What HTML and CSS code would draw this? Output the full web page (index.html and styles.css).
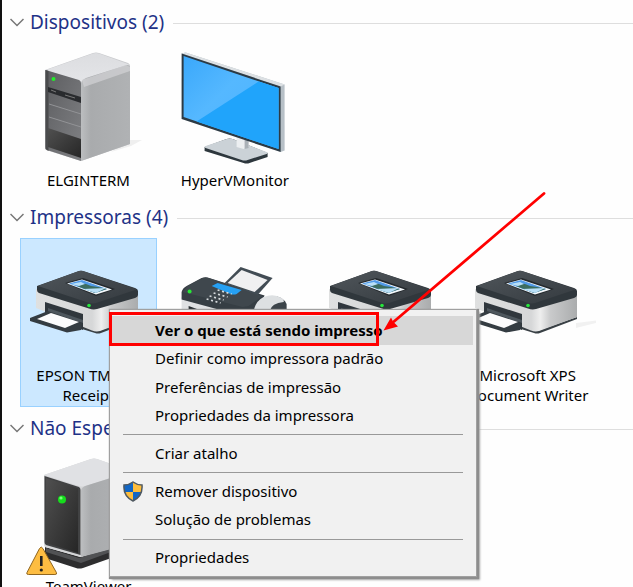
FILE: index.html
```html
<!DOCTYPE html>
<html lang="pt-BR">
<head>
<meta charset="utf-8">
<title>Dispositivos e Impressoras</title>
<link rel="stylesheet" href="styles.css">
</head>
<body>
<svg class="defs" width="0" height="0">
  <defs>
    <linearGradient id="side" x1="0" y1="0" x2="1" y2="0"><stop offset="0" stop-color="#bcbec0"/><stop offset=".2" stop-color="#a9abad"/><stop offset="1" stop-color="#b0b2b4"/></linearGradient>
    <linearGradient id="top" x1="0" y1="0" x2="0" y2="1"><stop offset="0" stop-color="#dcdde0"/><stop offset="1" stop-color="#e4e5e8"/></linearGradient>
    <linearGradient id="front" x1="0" y1="0" x2="1" y2="1"><stop offset="0" stop-color="#5c5d60"/><stop offset="1" stop-color="#808184"/></linearGradient>
    <linearGradient id="dark" x1="0" y1="0" x2="1" y2="1"><stop offset="0" stop-color="#505050"/><stop offset="1" stop-color="#262626"/></linearGradient>
    <linearGradient id="screen" x1="0" y1="0" x2="1" y2="1"><stop offset="0" stop-color="#3aa8fb"/><stop offset=".4" stop-color="#55b8ff"/><stop offset="1" stop-color="#4ab2ff"/></linearGradient>
    <linearGradient id="body" x1="0" y1="0" x2="1" y2="0"><stop offset="0" stop-color="#dfe0e0"/><stop offset=".55" stop-color="#d6d7d8"/><stop offset=".64" stop-color="#eeeeee"/><stop offset=".74" stop-color="#c9cacb"/><stop offset="1" stop-color="#aaacad"/></linearGradient>
    <linearGradient id="lid" x1="0" y1="0" x2="1" y2="1"><stop offset="0" stop-color="#50565b"/><stop offset="1" stop-color="#343a3f"/></linearGradient>
    <symbol id="printer" viewBox="20 238 137 120">
      <path d="M137 328l24-6v-2l-24 3z" fill="#000" opacity=".05"/>
      <path d="M36 306l60 23.500q2 1.500 5 .5l37-13V319l-37 14q-3 1-6 0L82 329z" fill="#394045"/>
      <path d="M36 289L92 308l46-15v24l-38 14q-4 1-8-.5L36 308z" fill="url(#body)"/>
      <path d="M45 302l38 12v16l-38-13z" fill="#30373d"/>
      <path d="M48 308l35 12v3l-35-11z" fill="#4d565d"/>
      <path d="M30 318l18-7 34 12-1 7-14 2.500L30 321z" fill="#343c42"/>
      <path d="M37 319l14-6 28 9-14 6z" fill="#fbfbfc"/>
      <path d="M37 286l42-15q2-.5 4 0l52 17q3 1 3 3v4q0 2-3 3l-38 11q-4 1-8-.5L39 293q-2-1-2-3z" fill="#30373c"/>
      <path d="M38 286l41-15q2-.5 4 0l53 18q1 .6-1 1L96 303q-4 1-8-.5z" fill="url(#lid)"/>
      <path d="M65 283l18-5 32 11-19 7z" fill="#24292d"/>
      <path d="M67 283.500l15-4 30 10-16 5z" fill="#f3f8fb"/>
      <path d="M69 283.500l13-3.500 25 9-12 4z" fill="#519ae8"/>
      <path d="M77 286q5-3 9-2l5 2 7 1 9 2-12 4z" fill="#3c6d60"/>
      <path d="M71 284l10-2 4 2-6 2zM83 289l23-1-10 5z" fill="#b8dff7"/>
      <circle cx="89" cy="305.500" r="1.800" fill="#27e63c"/>
    </symbol>
  </defs>
</svg>

<main class="window">
  <section class="group">
    <h2 class="group-head"><svg class="chevron" viewBox="0 0 14 9"><path d="M.5 1l6.500 6.500L13.500 1"/></svg><span class="group-title t-disp">Dispositivos (2)</span><i class="rule"></i></h2>
    <div class="tiles">
      <div class="tile">
        <svg class="icon" viewBox="20 43 137 120">
          <path d="M128 140l14 0-11 6-20 6z" fill="#000" opacity=".06"/>
          <path d="M45 70L93 53q3-1 6 0l29 10q2 1 2 3v78L81 161 46 150q-1-1-1-3z" fill="#c9cacd"/>
          <path d="M46 70L93 53.500q3-1 6 0L128 64q2 1 0 2L85 82q-3 1-6 0z" fill="url(#top)"/>
          <path d="M81 84q0-4 5-6l41-13q3 0 3 3v76L81 161z" fill="url(#side)"/>
          <path d="M82 80l44-15 4 2v4L84 87z" fill="#d5d6d8" opacity=".65"/>
          <path d="M45.500 70L79 80q2 1 2 3v78L47 150q-1.500-1-1.500-3z" fill="url(#front)"/>
          <path d="M45.500 70l3 1v80l-3-2z" fill="#4a4b4d"/>
          <path d="M48 87l33 10v6L48 92z" fill="#292b2e"/>
          <path d="M51 90l5 2M65 95l10 3" stroke="#777" fill="none"/>
          <path d="M49 104l32 10M49 117l32 10" stroke="#929396" fill="none"/>
          <path d="M48 128l33 11v19l-33-11z" fill="url(#dark)"/>
          <circle cx="53.500" cy="79" r="2" fill="#20ef28"/>
        </svg>
        <span class="label l-elgin">ELGINTERM</span>
      </div>
      <div class="tile">
        <svg class="icon" viewBox="166.400 43 137 120">
          <path d="M205 147l22-8q3-1 6 0l35 14v4l-18 6q-3 1-6 0l-39-12z" fill="#2d373d"/>
          <path d="M206 146l21-7q3-1 6 0l34 13q2 1 0 2l-19 6q-3 1-6 0l-36-12q-2-1 0-2z" fill="#cbd2d7"/>
          <path d="M237 137l12 2v8l-5 2-7-2z" fill="#eceff1"/><path d="M245 139l4 1v8l-4 1z" fill="#aab1b7"/>
          <path d="M182 53.500l4-1 99 32v66l-4 1.500z" fill="#b7c0c7"/>
          <path d="M182 53.500l4-1 99 32-4 2z" fill="#dce0e3"/>
          <path d="M182 53.500l99 33V152l-99-33z" fill="#2c3a44"/>
          <path d="M184 56l95 32v61l-95-32z" fill="url(#screen)"/>
          <path d="M279 88v61l-82-27.500 62-40z" fill="#20a4fb"/>
        </svg>
        <span class="label l-hyper">HyperVMonitor</span>
      </div>
    </div>
  </section>

  <section class="group">
    <h2 class="group-head"><svg class="chevron" viewBox="0 0 14 9"><path d="M.5 1l6.500 6.500L13.500 1"/></svg><span class="group-title t-imp">Impressoras (4)</span><i class="rule"></i></h2>
    <div class="tiles">
      <div class="tile selected">
        <svg class="icon"><use href="#printer"/></svg>
        <span class="label">EPSON TM-T20</span><span class="label">Receipt</span>
      </div>
      <div class="tile">
        <svg class="icon" viewBox="166.400 238 137 120">
          <path d="M182 297l75 13 29-9 1 16h-105z" fill="#dfe1e3"/>
          <path d="M189 306l25 9-25-2z" fill="#252b2f"/>
          <path d="M182 292q1-4 5-6l15-8q3-1 6-.5l57 18q-4 10-14 18l-10 2-59-16z" fill="#363e44"/>
          <path d="M183 292l5-6 15-8q3-1 6 0l54 18-14 10-6 1z" fill="#3f474d"/>
          <path d="M225 283l16-16 32 11-15 17z" fill="#424c54"/>
          <path d="M228 283l14-13 26 10-13 12z" fill="#f0f0f1"/>
          <path d="M212 286l6-3 24 7-5 4q-3 1-6 0z" fill="#26a0f3"/>
          <path d="M218 290l14 4M214 293l14 4M210 296l14 4M207 299l14 4" stroke="#d8dcdf" stroke-width="1.700" stroke-dasharray="2 2.600" fill="none"/>
          <path d="M258 310q3-12 15-14 10 0 14 8v8z" fill="#3c444a"/>
          <path d="M254 311q2-10 10-14 10-4 18 1 3 2 2 4-12 1-14 9z" fill="#dde0e2"/>
          <circle cx="190" cy="291.500" r="2" fill="#26e936"/>
        </svg>
        <span class="label">Fax</span>
      </div>
      <div class="tile">
        <svg class="icon"><use href="#printer"/></svg>
        <span class="label">Microsoft Print to</span><span class="label">PDF</span>
      </div>
      <div class="tile">
        <svg class="icon"><use href="#printer"/></svg>
        <span class="label l-xps">Microsoft XPS</span><span class="label l-writer">Document Writer</span>
      </div>
    </div>
  </section>

  <section class="group">
    <h2 class="group-head"><svg class="chevron" viewBox="0 0 14 9"><path d="M.5 1l6.500 6.500L13.500 1"/></svg><span class="group-title t-nao">Não Especificado (1)</span><i class="rule"></i></h2>
    <div class="tiles">
      <div class="tile">
        <svg class="icon" viewBox="20 449 137 120">
          <path d="M45 547l36 10 50-17v11l-48 17q-4 1-7 0l-28-9q-3-1-3-4z" fill="#2d2d2e"/>
          <path d="M46 548l33 10 51-17v4l-49 18-35-11z" fill="#515254"/>
          <path d="M44 475l47-16q3-1 6 0l34 12v72l-51 14-35-10q-1-1-1-3z" fill="#d4d5d7"/>
          <path d="M44 475l47-16q3-1 6 0l34 12-45 15q-4 1-7 0z" fill="#e0e1e4"/>
          <path d="M81 491q0-3 4-5l45-14v72l-49 13z" fill="url(#side)"/>
          <path d="M44.500 476L79 487q1.500 1 1.500 3v65L46 545q-1.500-1-1.500-3z" fill="#414243"/>
          <path d="M46 478l32 10.500V553l-32-10z" fill="url(#dark)"/>
          <circle cx="62" cy="499.500" r="4" fill="#15de1c"/><circle cx="61" cy="498" r="1.600" fill="#79ff79"/>
          <path d="M39.500 548.500q1.700-3 3.400 0l13.500 24q1 2-1.500 2H28.500q-2.500 0-1.500-2z" fill="#fdbd42" stroke="#8f651f"/>
          <path d="M41.300 556v10" stroke="#222" stroke-width="2.600"/><circle cx="41.300" cy="570" r="1.600" fill="#222"/>
        </svg>
        <span class="label l-team">TeamViewer</span>
      </div>
    </div>
  </section>
</main>

<nav class="menu">
  <div class="item default"><span class="m1">Ver o que está sendo impresso</span></div>
  <div class="item"><span class="m2">Definir como impressora padrão</span></div>
  <div class="item"><span class="m3">Preferências de impressão</span></div>
  <div class="item"><span class="m4">Propriedades da impressora</span></div>
  <hr>
  <div class="item"><span class="m5">Criar atalho</span></div>
  <hr>
  <div class="item"><svg class="shield" viewBox="0 0 20 21"><path d="M10 1Q14 4 19 4 20 15 10 20 0 15 1 4 6 4 10 1z" fill="#fdbd3c"/><path d="M10 1v10H1.300Q.6 8 1 4 6 4 10 1zM10 11h8.700Q17 17 10 20z" fill="#1266c4"/><path d="M10 1Q14 4 19 4 20 15 10 20 0 15 1 4 6 4 10 1z" fill="none" stroke="#505961" stroke-width="1.500"/></svg><span class="m6">Remover dispositivo</span></div>
  <div class="item"><span class="m7">Solução de problemas</span></div>
  <hr>
  <div class="item"><span class="m8">Propriedades</span></div>
</nav>

<div class="callout"></div>
<svg class="arrow" viewBox="380 189 170 146"><path d="M544 193.500L394 321.500" stroke="#f00" stroke-width="2.800" stroke-linecap="round"/><path d="M383.500 330.500l7.500-13 2 4 5 5z" fill="#f00"/></svg>
</body>
</html>
```
FILE: styles.css
```css
* { box-sizing: border-box; }
body {
  margin: 0;
  width: 633px;
  height: 587px;
  overflow: hidden;
  position: relative;
  background: #fefefe;
  color: #000;
  font: 15px/19.500px "Noto Sans", "Open Sans", sans-serif;
}
.defs { position: absolute; }
.window {
  height: 587px;
  overflow: hidden;
  border-left: 2px solid #111;
  padding: 1px 0 0;
}
.group-head {
  display: flex;
  align-items: center;
  height: 42px;
  margin: 0;
  padding-left: 8px;
  font-size: 19px;
  line-height: 26px;
  font-weight: 400;
  color: #1e3287;
}
.chevron { width: 14px; height: 9px; flex: none; margin-right: 6px; fill: none; stroke: #777; stroke-width: 1.500; }
.group-title { white-space: nowrap; }
.rule { flex: 1; height: 1px; margin-left: 9px; margin-top: 2px; background: #dedede; }
.tiles { display: flex; gap: 9.400px; padding-left: 18px; }
.tile { flex: none; display: flex; flex-direction: column; align-items: center; width: 137px; height: 153px; white-space: nowrap; }
.group + .group .tile { height: 169px; }
.icon { width: 137px; height: 120px; flex: none; margin-bottom: 8px; overflow: visible; }
.selected { background: #cce8ff; box-shadow: inset 0 0 0 1px #99d1ff; }
.menu {
  position: absolute;
  left: 109px;
  top: 309px;
  width: 368px;
  height: 268px;
  padding: 6px 3px 0 2px;
  background: #f1f1f1;
  border: 1px solid #a0a0a0;
  box-shadow: 1px 1px 1px 1px #8d8d8d, 3px 3px 2px #aaa;
}
.item { position: relative; display: flex; align-items: center; height: 28.600px; padding-left: 43px; white-space: nowrap; }
.default { background: #d7d7d7; font-weight: 700; }
.shield { position: absolute; left: 11px; top: 4px; width: 20px; height: 21px; }
.menu hr { height: 9.200px; margin: 0 10px 0 11px; border: 0; background: linear-gradient(#999, #999) 0 4px / 100% 1px no-repeat; }
.callout { position: absolute; left: 109px; top: 312px; width: 270px; height: 34px; border: 3px solid #f00; }
.arrow { position: absolute; left: 380px; top: 189px; width: 170px; height: 146px; }
```
